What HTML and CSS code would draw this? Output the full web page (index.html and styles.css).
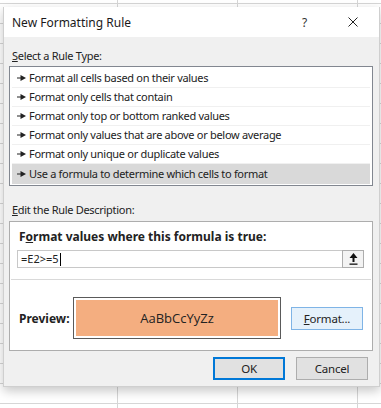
FILE: index.html
```html
<!DOCTYPE html>
<html lang="en">
  <head>
    <meta charset="UTF-8" />
    <meta name="viewport" content="width=device-width, initial-scale=1.0" />
    <title>New Formatting Rule</title>
    <link rel="stylesheet" href="styles.css">
  </head>
  <body>
    <div class="dialog">
      <div class="titlebar">
        <span class="title">New Formatting Rule</span>
        <span class="help">?</span>
        <span class="close">
          <svg width="10" height="10" viewBox="0 0 10 10"><path d="M0.5 0.5 L9.5 9.5 M9.5 0.5 L0.5 9.5" stroke="#222" stroke-width="1" fill="none"/></svg>
        </span>
      </div>
      <div class="body">
        <div class="label"><u>S</u>elect a Rule Type:</div>
        <div class="rule-list">
          <div class="rule"><svg class="arrow" width="9" height="6" viewBox="0 0 9 6"><path d="M0 2.5 H4 V3.5 H0 Z M3.5 0 L9 3 L3.5 6 Z" fill="#222"/></svg>Format all cells based on their values</div>
          <div class="rule"><svg class="arrow" width="9" height="6" viewBox="0 0 9 6"><path d="M0 2.5 H4 V3.5 H0 Z M3.5 0 L9 3 L3.5 6 Z" fill="#222"/></svg>Format only cells that contain</div>
          <div class="rule"><svg class="arrow" width="9" height="6" viewBox="0 0 9 6"><path d="M0 2.5 H4 V3.5 H0 Z M3.5 0 L9 3 L3.5 6 Z" fill="#222"/></svg>Format only top or bottom ranked values</div>
          <div class="rule"><svg class="arrow" width="9" height="6" viewBox="0 0 9 6"><path d="M0 2.5 H4 V3.5 H0 Z M3.5 0 L9 3 L3.5 6 Z" fill="#222"/></svg>Format only values that are above or below average</div>
          <div class="rule"><svg class="arrow" width="9" height="6" viewBox="0 0 9 6"><path d="M0 2.5 H4 V3.5 H0 Z M3.5 0 L9 3 L3.5 6 Z" fill="#222"/></svg>Format only unique or duplicate values</div>
          <div class="rule selected"><svg class="arrow" width="9" height="6" viewBox="0 0 9 6"><path d="M0 2.5 H4 V3.5 H0 Z M3.5 0 L9 3 L3.5 6 Z" fill="#222"/></svg>Use a formula to determine which cells to format</div>
        </div>

        <div class="label second"><u>E</u>dit the Rule Description:</div>
        <div class="desc">
          <div class="desc-top">
            <div class="bold-label">F<u>o</u>rmat values where this formula is true:</div>
            <div class="formula-row">
              <div class="formula">=E2&gt;=5<span class="caret"></span></div>
              <div class="pick-btn">
                <svg width="9" height="12" viewBox="0 0 9 12"><path d="M4.5 0 L8.5 5 H5.5 V9 H3.5 V5 H0.5 Z" fill="#111"/><rect x="0.5" y="10.5" width="8" height="1.3" fill="#111"/></svg>
              </div>
            </div>
          </div>
          <div class="preview-row">
            <div class="bold-label">Preview:</div>
            <div class="preview"><div class="preview-fill">AaBbCcYyZz</div></div>
            <div class="btn format-btn"><u>F</u>ormat...</div>
          </div>
        </div>

        <div class="actions">
          <div class="btn ok">OK</div>
          <div class="btn">Cancel</div>
        </div>
      </div>
    </div>
  </body>
</html>
```

FILE: styles.css
```css
body {
  margin: 0;
  width: 381px;
  height: 408px;
  overflow: hidden;
  font-family: "Noto Sans", "Open Sans", sans-serif;
  color: #000;
  background-color: #fff;
  background-image:
    linear-gradient(to right, #d6d6d6 1px, transparent 1px),
    linear-gradient(to bottom, #d6d6d6 1px, transparent 1px);
  background-size: 120px 100%, 100% 20px;
  background-position: 117px 0, 0 3px;
}
.dialog {
  margin: 7px 0 0 3px;
  width: 375px;
  height: 379px;
  background: #f0f0f0;
  border: 1px solid #cfcfcf;
  border-top: none;
  box-shadow: 0 4px 10px rgba(0, 0, 0, 0.22);
  display: flex;
  flex-direction: column;
}
.titlebar {
  height: 30px;
  background: #fff;
  display: flex;
  align-items: center;
  padding-left: 8px;
}
.title {
  font-size: 12px;
  flex: 1;
  color: #1a1a1a;
}
.help {
  font-size: 12px;
  width: 10px;
  margin-right: 36px;
  color: #333;
}
.close {
  width: 10px;
  height: 10px;
  margin-right: 21px;
  display: flex;
}
.body {
  padding: 0 6px 0 5px;
  display: flex;
  flex-direction: column;
}
.label {
  font-size: 11px;
  letter-spacing: -0.3px;
  height: 18px;
  line-height: 18px;
  margin-top: 10px;
  margin-left: 3px;
  margin-bottom: 1px;
  color: #222;
}
.label.second {
  margin-top: 15px;
  margin-bottom: 2px;
}
.rule-list {
  background: #fff;
  border: 1px solid #828790;
  padding: 2px 2px;
}
.rule {
  height: 19px;
  line-height: 18px;
  font-size: 11px;
  letter-spacing: -0.3px;
  display: flex;
  align-items: center;
  padding-left: 5px;
  border-bottom: 1px solid #f0f0f0;
  box-sizing: border-box;
  color: #222;
}
.rule.selected {
  background: #d9d9d9;
  border-bottom-color: #d9d9d9;
  height: 20px;
  margin-bottom: -1px;
}
.arrow {
  margin-right: 3px;
}
.desc {
  background: #fff;
  border: 1px solid #adadad;
  height: 128px;
  display: flex;
  flex-direction: column;
}
.desc-top {
  padding: 6px 7px 0 6px;
  height: 58px;
  box-sizing: border-box;
  border-bottom: 1px solid #d9d9d9;
  margin: 0 1px;
}
.bold-label {
  font-size: 12px;
  font-weight: bold;
  color: #222;
  margin-left: 2px;
}
.formula-row {
  display: flex;
  margin-top: 5px;
  height: 18px;
}
.formula {
  flex: 1;
  border: 1px solid #c8c8c8;
  border-right: none;
  font-size: 11px;
  line-height: 16px;
  padding-left: 3px;
  display: flex;
  align-items: center;
  color: #222;
}
.caret {
  width: 1px;
  height: 13px;
  background: #000;
  margin-left: 1px;
}
.pick-btn {
  width: 22px;
  border: 1px solid #adadad;
  background: #f3f3f3;
  display: flex;
  align-items: center;
  justify-content: center;
  box-sizing: border-box;
}
.preview-row {
  display: flex;
  align-items: center;
  padding: 0 0 0 7px;
  margin-top: 17px;
}
.preview-row .bold-label {
  width: 54px;
  margin-left: 2px;
}
.preview {
  width: 208px;
  height: 42px;
  border: 1px solid #5a5a5a;
  box-sizing: border-box;
  padding: 2px;
  background: #fff;
}
.preview-fill {
  height: 100%;
  background: #f4ae80;
  display: flex;
  align-items: center;
  justify-content: center;
  font-family: "Open Sans", "Noto Sans", sans-serif;
  font-size: 13px;
  color: #222;
}
.btn {
  width: 72px;
  height: 23px;
  border: 1px solid #adadad;
  background: #e1e1e1;
  box-sizing: border-box;
  display: flex;
  align-items: center;
  justify-content: center;
  font-size: 11.5px;
  letter-spacing: -0.2px;
  color: #222;
}
.format-btn {
  margin-left: 10px;
  background: #e5f1fb;
  border-color: #7fb4e6;
}
.actions {
  display: flex;
  justify-content: flex-end;
  gap: 11px;
  margin-top: 6px;
  padding-right: 5px;
}
.btn.ok {
  border: 2px solid #0078d7;
}
```
